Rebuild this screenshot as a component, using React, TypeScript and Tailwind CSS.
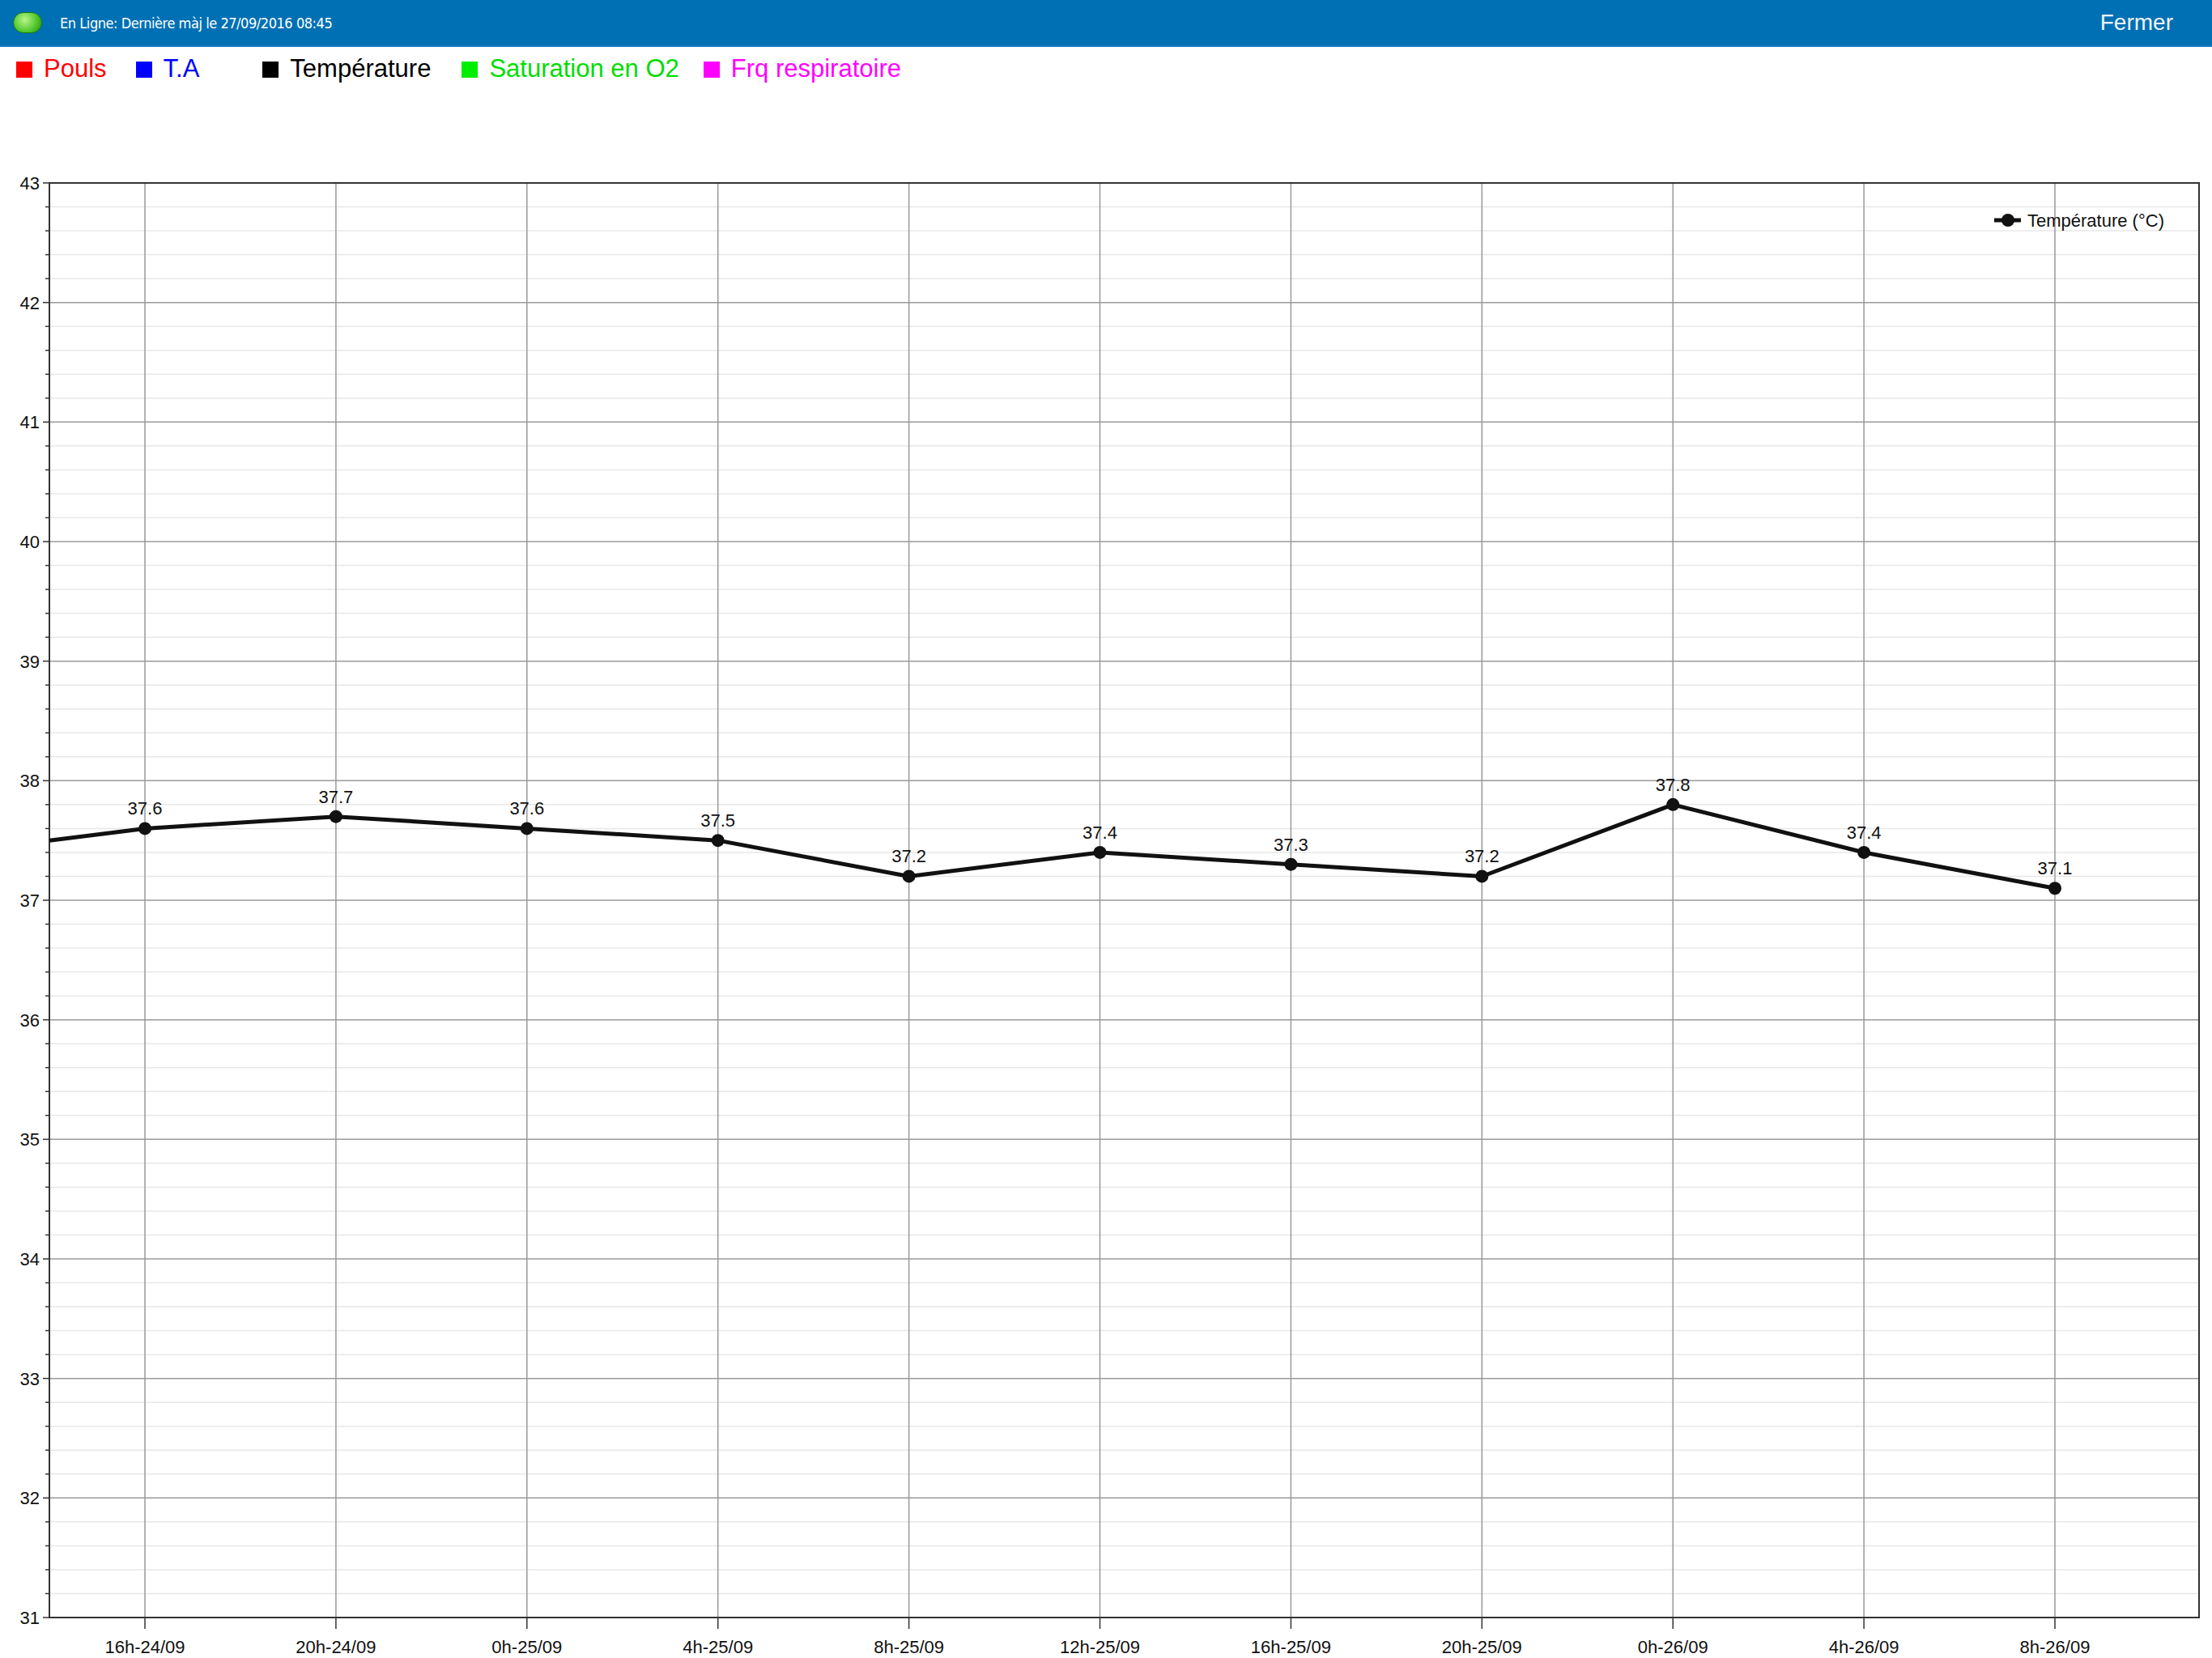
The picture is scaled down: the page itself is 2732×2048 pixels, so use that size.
import React from "react";

const data = [37.6, 37.7, 37.6, 37.5, 37.2, 37.4, 37.3, 37.2, 37.8, 37.4, 37.1];
const labels = ["16h-24/09","20h-24/09","0h-25/09","4h-25/09","8h-25/09","12h-25/09","16h-25/09","20h-25/09","0h-26/09","4h-26/09","8h-26/09"];
const L = 61, R = 2716, T = 109, B = 1881;
const yOf = (v: number) => T + (43 - v) * ((B - T) / 12);
const xOf = (i: number) => 179 + i * 235.9;

export default function App() {
  const minors: number[] = [];
  for (let k = 0; k <= 60; k++) minors.push(31 + k * 0.2);
  const pts = [`${L},${yOf(37.5)}`, ...data.map((v, i) => `${xOf(i)},${yOf(v)}`)].join(" ");
  return (
    <div className="w-[2732px] h-[2048px] bg-white overflow-hidden" style={{ fontFamily: "'Liberation Sans', Arial, sans-serif" }}>
      <div className="h-[58px] bg-[#0070b4] border-b-2 border-[#1a7cc0] flex items-center px-[16px] text-white">
        <div className="w-[36px] h-[26px] rounded-full bg-[radial-gradient(circle_at_40%_35%,#b8f58a,#4cc62a_60%,#2a8a18)] border border-[#1e7a12]" />
        <span className="ml-[22px] text-[18px] tracking-tight" style={{ fontFamily: "'DejaVu Sans Condensed','DejaVu Sans', sans-serif" }}>En Ligne: Dernière màj le 27/09/2016 08:45</span>
        <span className="ml-auto mr-[32px] text-[28px] text-[#f0f4f8]">Fermer</span>
      </div>
      <div className="h-[59px] flex items-center pl-[20px] text-[31px] pb-[4px]">
        <span className="w-[20px] h-[20px] bg-[#ff0000] mr-[14px]" /><span className="text-[#ff0000]">Pouls</span>
        <span className="w-[20px] h-[20px] bg-[#0000ff] ml-[36px] mr-[14px]" /><span className="text-[#0000ff]">T.A</span>
        <span className="w-[20px] h-[20px] bg-black ml-[78px] mr-[14px]" /><span className="text-black">Température</span>
        <span className="w-[20px] h-[20px] bg-[#00ee00] ml-[38px] mr-[14px]" /><span className="text-[#00dd00]">Saturation en O2</span>
        <span className="w-[20px] h-[20px] bg-[#ff00ff] ml-[30px] mr-[14px]" /><span className="text-[#ff00ff]">Frq respiratoire</span>
      </div>
      <svg width="2732" height="1931" className="block">
        {minors.map((v, k) => (
          <g key={k}>
            <line x1={L} x2={R} y1={yOf(v)} y2={yOf(v)} stroke={k % 5 === 0 ? "#9a9a9a" : "#e8e8e8"} strokeWidth={1.5} />
            <line x1={L - (k % 5 === 0 ? 8 : 5)} x2={L} y1={yOf(v)} y2={yOf(v)} stroke="#333" strokeWidth={1.5} />
          </g>
        ))}
        {labels.map((_, i) => (
          <g key={i}>
            <line x1={xOf(i)} x2={xOf(i)} y1={T} y2={B} stroke="#999" strokeWidth={1.5} />
            <line x1={xOf(i)} x2={xOf(i)} y1={B} y2={B + 14} stroke="#333" strokeWidth={1.5} />
            <text x={xOf(i)} y={B + 44} fontSize="22" textAnchor="middle" fill="#111">{labels[i]}</text>
          </g>
        ))}
        <rect x={L} y={T} width={R - L} height={B - T} fill="none" stroke="#333" strokeWidth={2} />
        {Array.from({ length: 13 }, (_, k) => 31 + k).map((v) => (
          <text key={v} x={L - 12} y={yOf(v) + 8} fontSize="22" textAnchor="end" fill="#111">{v}</text>
        ))}
        <polyline points={pts} fill="none" stroke="#111" strokeWidth={5} strokeLinejoin="round" />
        {data.map((v, i) => (
          <g key={i}>
            <circle cx={xOf(i)} cy={yOf(v)} r={8} fill="#111" />
            <text x={xOf(i)} y={yOf(v) - 17} fontSize="22" textAnchor="middle" fill="#111">{v.toFixed(1)}</text>
          </g>
        ))}
        <line x1={2463} x2={2496} y1={155} y2={155} stroke="#111" strokeWidth={5} />
        <circle cx={2480} cy={155} r={8} fill="#111" />
        <text x={2504} y={163} fontSize="22" fill="#111">Température (°C)</text>
      </svg>
    </div>
  );
}
